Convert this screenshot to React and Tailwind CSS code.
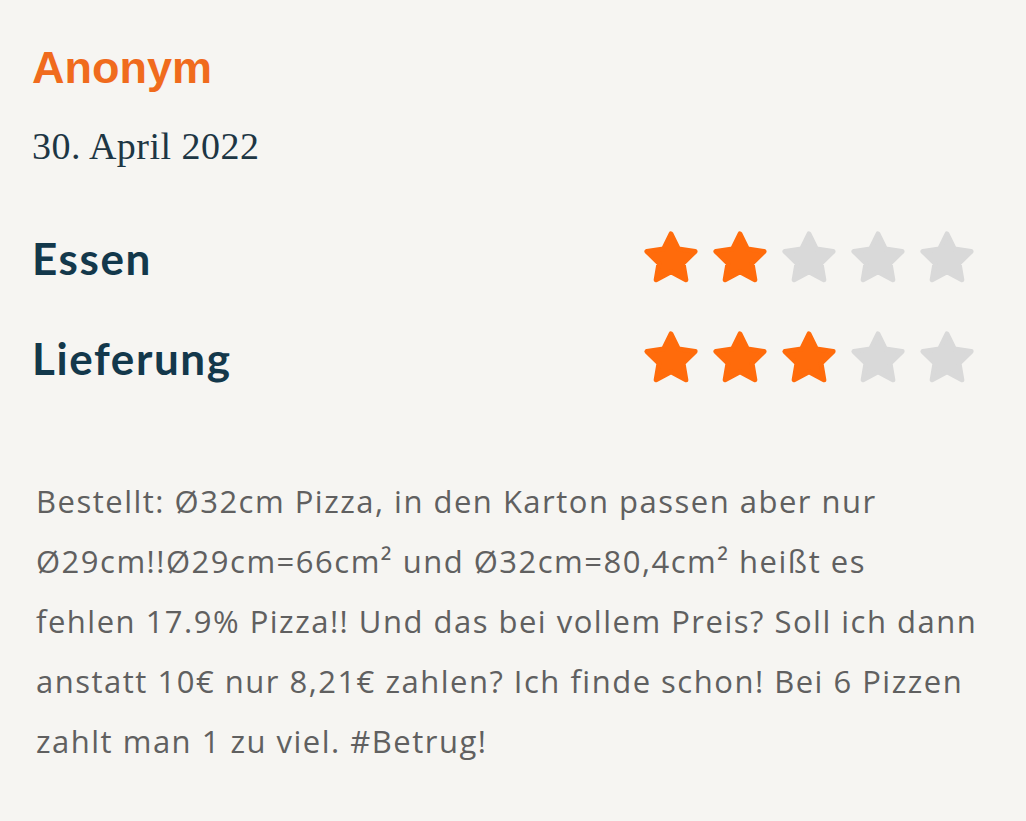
import React from 'react';

const ORANGE = '#ff6b0b';
const GREY = '#d9d9d9';

// rounded five-point star
const Star = ({ filled }) => (
    <svg width="58" height="58" viewBox="0 0 24 24" className="shrink-0">
        <polygon
            points="12,2 15.09,8.26 22,9.27 17,14.14 18.18,21.02 12,17.77 5.82,21.02 7,14.14 2,9.27 8.91,8.26"
            fill={filled ? ORANGE : GREY}
            stroke={filled ? ORANGE : GREY}
            strokeWidth="2"
            strokeLinejoin="round"
        />
    </svg>
);

const RatingRow = ({ label, value }) => (
    <div className="flex h-[100px] items-center justify-between">
        <span className="text-[44px] font-bold leading-none tracking-[1.6px] text-[#13384b]" style={{ fontFamily: 'Lato, sans-serif' }}>{label}</span>
        <div className="flex gap-[11px]">
            {[1, 2, 3, 4, 5].map(i => <Star key={i} filled={i <= value} />)}
        </div>
    </div>
);

export default function App() {
    return (
        <div className="min-h-[821px] w-full bg-[#f6f5f2] pl-[32px] pr-[40px] pt-[43px]">
            <h2 className="text-[45px] font-bold leading-[50px] text-[#f06b1d]" style={{ fontFamily: '"Liberation Sans", Arial, sans-serif' }}>Anonym</h2>
            <p className="mt-[33px] text-[38px] leading-[41px] tracking-[0.5px] text-[#1d3644]" style={{ fontFamily: '"Liberation Serif", serif' }}>30. April 2022</p>

            <div className="mt-[41px] mr-[10px]">
                <RatingRow label="Essen" value={2} />
                <RatingRow label="Lieferung" value={3} />
            </div>

            <p className="mt-[63px] pl-[4px] text-[31px] leading-[60px] tracking-[1.5px] text-[#606060]" style={{ fontFamily: '"Open Sans", sans-serif' }}>
                Bestellt: Ø32cm Pizza, in den Karton passen aber nur<br />
                Ø29cm!!Ø29cm=66cm² und Ø32cm=80,4cm² heißt es<br />
                fehlen 17.9% Pizza!! Und das bei vollem Preis? Soll ich dann<br />
                anstatt 10€ nur 8,21€ zahlen? Ich finde schon! Bei 6 Pizzen<br />
                zahlt man 1 zu viel. #Betrug!
            </p>
        </div>
    );
}
